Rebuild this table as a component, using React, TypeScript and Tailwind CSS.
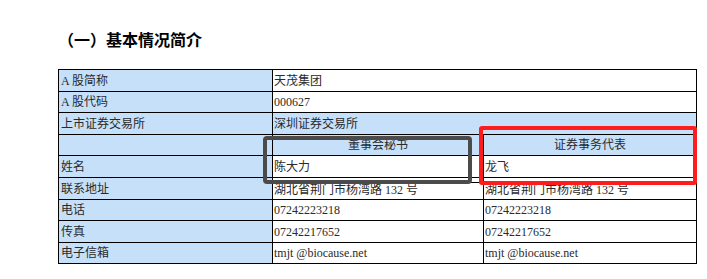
const rows: { label: string; a: string; blueValue?: boolean; h: string }[] = [
  { label: 'A 股简称', a: '天茂集团', h: 'h-[22px]' },
  { label: 'A 股代码', a: '000627', h: 'h-[21px]' },
  { label: '上市证券交易所', a: '深圳证券交易所', blueValue: true, h: 'h-[22px]' },
];

const people: { label: string; a: string; b: string; h: string }[] = [
  { label: '姓名', a: '陈大力', b: '龙飞', h: 'h-[22px]' },
  { label: '联系地址', a: '湖北省荆门市杨湾路 132 号', b: '湖北省荆门市杨湾路 132 号', h: 'h-[22px]' },
  { label: '电话', a: '07242223218', b: '07242223218', h: 'h-[21px]' },
  { label: '传真', a: '07242217652', b: '07242217652', h: 'h-[22px]' },
  { label: '电子信箱', a: 'tmjt @biocause.net', b: 'tmjt @biocause.net', h: 'h-[21px]' },
];

const cell = 'border-r border-b border-black flex items-center text-[12px] leading-none';

// address row has a second rule line just under the top border
const AddressValue = ({ text }: { text: string }) => (
  <div className="h-full pt-[4px]">
    <div className="h-full border-t border-black">
      <div className="pl-[1px] text-[12px] leading-[14px]">{text}</div>
    </div>
  </div>
);

export default function App() {
  return (
    <div
      className="w-[707px] h-[279px] bg-white text-[#2a2a2a] relative overflow-hidden"
      style={{ fontFamily: '"Liberation Serif", "Noto Sans CJK SC", serif' }}
    >
      <h2
        className="absolute left-[58px] top-[29px] text-[16px] font-bold text-black leading-[20px]"
        style={{ fontFamily: '"Noto Sans CJK SC", sans-serif' }}
      >
        （一）基本情况简介
      </h2>

      <div className="absolute left-[58px] top-[69px] w-[639px] border-l border-t border-black">
        <div className="grid grid-cols-[214px_211px_213px]">
          {rows.map((r) => (
            <div key={r.label} className="contents">
              <div className={`${cell} ${r.h} bg-[#c6e0fa] pl-[2px]`}>{r.label}</div>
              <div className={`${cell} ${r.h} col-span-2 pl-[1px] ${r.blueValue ? 'bg-[#c6e0fa]' : 'bg-white'}`}>
                {r.a}
              </div>
            </div>
          ))}

          <div className={`${cell} h-[21px] bg-[#c6e0fa]`} />
          <div className={`${cell} h-[21px] bg-[#c6e0fa] justify-center`}>董事会秘书</div>
          <div className={`${cell} h-[21px] bg-[#c6e0fa] justify-center`}>证券事务代表</div>

          {people.map((p) => (
            <div key={p.label} className="contents">
              <div className={`${cell} ${p.h} bg-[#c6e0fa] pl-[2px]`}>{p.label}</div>
              {p.label === '联系地址' ? (
                <>
                  <div className={`border-r border-b border-black ${p.h} bg-white`}>
                    <AddressValue text={p.a} />
                  </div>
                  <div className={`border-r border-b border-black ${p.h} bg-white`}>
                    <AddressValue text={p.b} />
                  </div>
                </>
              ) : (
                <>
                  <div className={`${cell} ${p.h} bg-white pl-[1px]`}>{p.a}</div>
                  <div className={`${cell} ${p.h} bg-white pl-[1px]`}>{p.b}</div>
                </>
              )}
            </div>
          ))}
        </div>
      </div>

      {/* annotation boxes */}
      <div className="absolute left-[263px] top-[136px] w-[209px] h-[48px] border-[4px] border-[#4b4b4b] rounded-[4px]" />
      <div className="absolute left-[479px] top-[126px] w-[218px] h-[59px] border-[4px] border-[#ff1c1c] rounded-[3px]" />
    </div>
  );
}
